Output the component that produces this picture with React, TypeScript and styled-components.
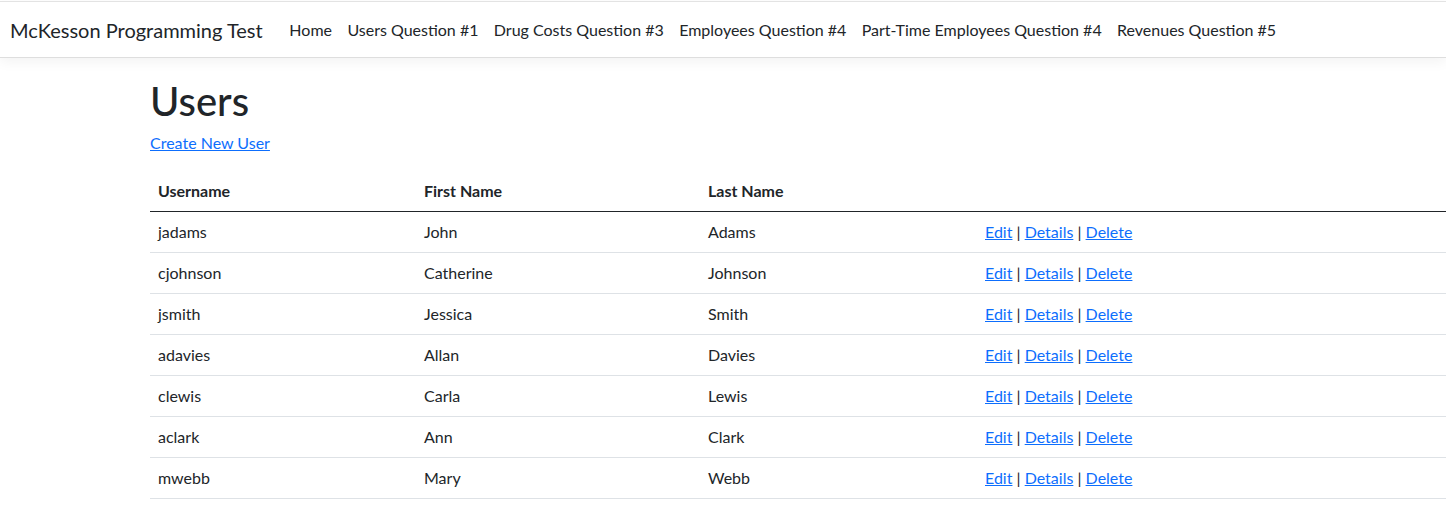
import React from "react";
import styled, { createGlobalStyle } from "styled-components";

const GlobalStyle = createGlobalStyle`
  html, body { margin: 0; padding: 0; background: #fff; }
  body {
    font-family: "Lato", "Noto Sans", sans-serif;
    font-size: 16px;
    line-height: 1.5;
    color: #212529;
    overflow-x: hidden;
  }
  * { box-sizing: border-box; }
`;

const NavBar = styled.header`
  margin-top: 1px;
  height: 57px;
  border-top: 1px solid #e3e3e3;
  border-bottom: 1px solid #dedede;
  box-shadow: 0 0.25rem 0.75rem rgba(0, 0, 0, 0.05);
  display: flex;
  align-items: center;
  padding-left: 10px;
  background: #fff;
`;

const Brand = styled.a`
  font-size: 20px;
  color: #212529;
  text-decoration: none;
  margin-right: 19px;
  white-space: nowrap;
`;

const NavList = styled.nav`
  display: flex;
  align-items: center;
`;

const NavLink = styled.a`
  padding: 8px 7.7px;
  font-size: 16px;
  color: #212529;
  text-decoration: none;
  white-space: nowrap;
`;

const Main = styled.main`
  padding: 19px 0 0 150px;
`;

const Title = styled.h1`
  margin: 0 0 6px;
  font-size: 40px;
  font-weight: 500;
  line-height: 1.2;
`;

const CreateLink = styled.a`
  display: inline-block;
  margin-bottom: 16px;
  color: #0d6efd;
  text-decoration: underline;
`;

const Table = styled.table`
  width: 1296px;
  border-collapse: collapse;
  table-layout: fixed;
`;

const Col = styled.col<{ $w?: number }>`
  width: ${(p) => (p.$w ? `${p.$w}px` : "auto")};
`;

const HeadCell = styled.th`
  text-align: left;
  font-weight: 700;
  padding: 8px;
  height: 40px;
  border-bottom: 1px solid #212529;
`;

const BodyRow = styled.tr`
  border-bottom: 1px solid #dee2e6;
`;

const Cell = styled.td`
  padding: 8px;
  height: 41px;
`;

const ActionLink = styled.a`
  color: #0d6efd;
  text-decoration: underline;
`;

const users = [
  ["jadams", "John", "Adams"],
  ["cjohnson", "Catherine", "Johnson"],
  ["jsmith", "Jessica", "Smith"],
  ["adavies", "Allan", "Davies"],
  ["clewis", "Carla", "Lewis"],
  ["aclark", "Ann", "Clark"],
  ["mwebb", "Mary", "Webb"],
];

const links = [
  "Home",
  "Users Question #1",
  "Drug Costs Question #3",
  "Employees Question #4",
  "Part-Time Employees Question #4",
  "Revenues Question #5",
];

export default function App() {
  return (
    <>
      <GlobalStyle />
      <NavBar>
        <Brand href="#">McKesson Programming Test</Brand>
        <NavList>
          {links.map((l) => (
            <NavLink key={l} href="#">
              {l}
            </NavLink>
          ))}
        </NavList>
      </NavBar>
      <Main>
        <Title>Users</Title>
        <CreateLink href="#">Create New User</CreateLink>
        <Table>
          <colgroup>
            <Col $w={266} />
            <Col $w={284} />
            <Col $w={277} />
            <Col />
          </colgroup>
          <thead>
            <tr>
              <HeadCell>Username</HeadCell>
              <HeadCell>First Name</HeadCell>
              <HeadCell>Last Name</HeadCell>
              <HeadCell />
            </tr>
          </thead>
          <tbody>
            {users.map(([u, f, l]) => (
              <BodyRow key={u}>
                <Cell>{u}</Cell>
                <Cell>{f}</Cell>
                <Cell>{l}</Cell>
                <Cell>
                  <ActionLink href="#">Edit</ActionLink> |{" "}
                  <ActionLink href="#">Details</ActionLink> |{" "}
                  <ActionLink href="#">Delete</ActionLink>
                </Cell>
              </BodyRow>
            ))}
          </tbody>
        </Table>
      </Main>
    </>
  );
}
